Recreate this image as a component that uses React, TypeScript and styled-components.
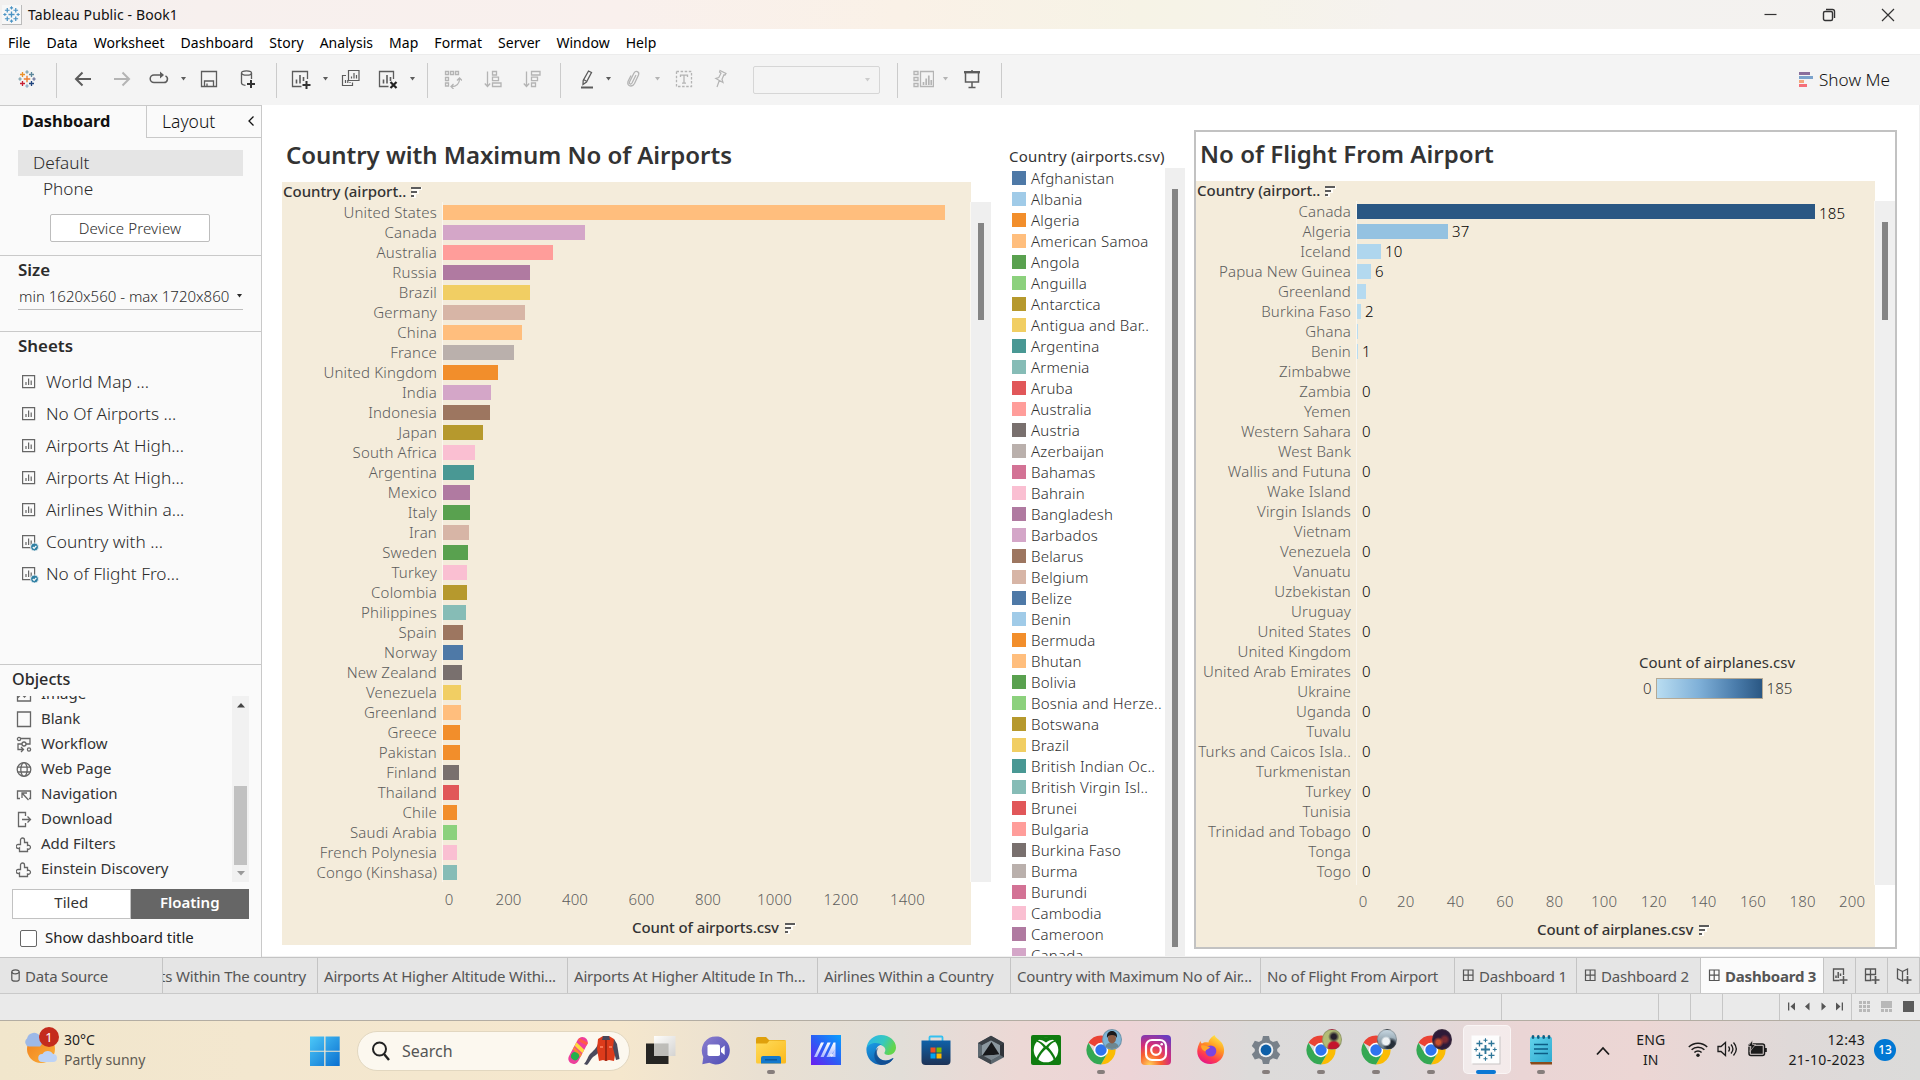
import React from 'react';
import styled, { createGlobalStyle, css } from 'styled-components';

const Global = createGlobalStyle`
  * { box-sizing: border-box; }
  html, body { margin: 0; padding: 0; overflow: hidden; background: #fff; }
  body { font-family: "Noto Sans", "Open Sans", sans-serif; color: #333; }
  svg { display: block; flex: none; }
`;

/* ---------- shell ---------- */
const Screen = styled.div`
  width: 1920px; height: 1080px; display: flex; flex-direction: column; overflow: hidden; white-space: nowrap;
`;
const TitleBar = styled.header`
  height: 29px; display: flex; align-items: center; padding-left: 2px; flex: none;
  background: linear-gradient(90deg, #f2f0ef 0, #f7f0ee 200px, #f9f0ed 620px, #faf1e7 900px, #f6f3e6 1140px, #f6f3e9 1250px, #f5f2ef 1400px, #f3f2f0 1920px);
`;
const AppBadge = styled.div`
  width: 20px; height: 20px; display: grid; place-items: center; background: #f7f7f7;
  border-right: 1px solid #bbb; border-bottom: 1px solid #bbb;
`;
const WindowTitle = styled.div`font-size: 14px; letter-spacing: 0.1px; color: #111; margin-left: 6px; flex: 1;`;
const WindowControls = styled.div`display: flex; gap: 45px; padding-right: 25px; align-items: center;`;
const MenuBar = styled.nav`
  height: 25px; display: flex; gap: 16px; padding: 2px 0 0 8px; background: #fff; flex: none;
  font-size: 14px; line-height: 24px; color: #000; letter-spacing: 0.03px;
`;
const Toolbar = styled.div`
  height: 51px; flex: none; display: flex; align-items: center; padding-bottom: 2px; background: #f4f4f4; border-top: 1px solid #ececec;
`;
const Tool = styled.div<{ $gap: number; $faded?: boolean }>`
  margin-left: ${p => p.$gap}px; flex: none; color: ${p => (p.$faded ? '#b4b4b4' : '#5c5c5c')};
`;
const ToolRule = styled.div<{ $gap: number }>`
  margin: 2px 0 0 ${p => p.$gap}px; width: 1px; height: 35px; background: #cbcbcb; flex: none;
`;
const ToolCombo = styled.div<{ $gap: number }>`
  margin: 2px 0 0 ${p => p.$gap}px; width: 127px; height: 28px; border: 1px solid #d6d6d6; border-radius: 2px; flex: none;
  display: flex; align-items: center; justify-content: flex-end; padding-right: 8px; color: #ccc;
`;
const ShowMe = styled.div`
  margin-left: auto; padding-right: 30px; display: flex; align-items: center; gap: 6px;
  font-size: 17.2px; font-weight: 350; color: #111;
  svg { margin-top: 1px; }
`;
const Work = styled.div`height: 852px; flex: none; display: flex;`;

/* ---------- side panel ---------- */
const Side = styled.aside`
  width: 262px; flex: none; display: flex; flex-direction: column; background: #fafafa;
  border-top: 1px solid #c9c9c9; border-right: 1px solid #c9c9c9;
`;
const SideTabs = styled.div`height: 32px; display: flex; flex: none; margin-bottom: 12px;`;
const SideTab = styled.div<{ $active?: boolean }>`
  display: flex; align-items: center;
  ${p => p.$active
    ? css`width: 146px; padding-left: 22px; font-size: 16.4px; font-weight: 700; color: #111; padding-bottom: 4px;`
    : css`flex: 1; padding: 0 6px 1px 15px; justify-content: space-between; font-size: 17.5px; font-weight: 350; color: #111;
        border-left: 1px solid #c9c9c9; border-bottom: 1px solid #c9c9c9;`}
  svg { margin-bottom: 1px; }
`;
const Device = styled.div<{ $indent: number; $on?: boolean }>`
  height: 26px; line-height: 25px; margin: 0 18px; padding-left: ${p => p.$indent}px; flex: none;
  font-size: 17.2px; font-weight: 350; color: #2b2b2b; background: ${p => (p.$on ? '#e5e5e5' : 'transparent')};
`;
const PreviewButton = styled.button`
  margin: 12px 0 13px 50px; width: 160px; height: 28px; flex: none; border: 1px solid #bdbdbd; border-radius: 2px; background: #fff;
  font: 350 15px "Noto Sans", sans-serif; letter-spacing: 0.15px; color: #2b2b2b; padding: 0;
`;
const Rule = styled.div`height: 1px; background: #c9c9c9; flex: none;`;
const Heading = styled.div`
  height: 28px; line-height: 28px; padding-left: 18px; font-size: 16.9px; font-weight: 650; color: #2b2b2b; flex: none;
`;
const ObjectsHeading = styled(Heading)`padding-left: 12px; font-size: 16.2px; font-weight: 500; margin-bottom: 3px;`;
const SizeSelect = styled.div`
  height: 26px; margin: 0 18px 21px; border-bottom: 1px solid #bdbdbd; display: flex; align-items: center; justify-content: space-between;
  font-size: 15px; font-weight: 350; color: #2b2b2b; flex: none; padding: 0 0 1px 1px;
`;
const SheetList = styled.div`flex: 1; padding-top: 5px;`;
const SheetItem = styled.div`
  height: 32px; display: flex; align-items: center; gap: 7px; padding-left: 21px; font-size: 17.3px; font-weight: 350; color: #2b2b2b;
  svg { margin-top: 2px; }
`;
const ObjectsArea = styled.div`height: 186px; display: flex; overflow: hidden; flex: none;`;
const ObjectItems = styled.div`flex: 1; margin-top: -16px;`;
const ObjectItem = styled.div`
  height: 25px; display: flex; align-items: center; gap: 9px; padding-left: 16px; font-size: 15px; color: #333;
  svg { margin-top: 3px; }
`;
const ObjectScroll = styled.div`
  width: 17px; margin-right: 12px; background: #f1f1f1; display: flex; flex-direction: column; align-items: center; padding: 7px 0 6px;
`;
const ObjectThumb = styled.div`width: 13px; height: 79px; margin: auto 0 6px; background: #c1c1c1;`;
const Toggle = styled.div`display: flex; margin: 7px 12px 11px; height: 30px; flex: none;`;
const ToggleHalf = styled.div<{ $on?: boolean }>`
  flex: 1; text-align: center; line-height: 25px; font-size: 15px; border: 1px solid ${p => (p.$on ? '#666' : '#c2c2c2')};
  background: ${p => (p.$on ? '#666' : '#fff')}; color: ${p => (p.$on ? '#fff' : '#333')}; font-weight: ${p => (p.$on ? 600 : 400)};
`;
const TitleCheck = styled.label`
  display: flex; align-items: center; gap: 8px; padding: 0 0 2px 20px; height: 16px; margin-bottom: 11px; font-size: 15px; color: #222; flex: none;
`;
const Box = styled.span`width: 17px; height: 17px; margin-top: 2px; border: 1px solid #666; border-radius: 2px; background: #fff;`;

/* ---------- dashboard canvas ---------- */
const Canvas = styled.main`
  flex: 1; display: flex; align-items: flex-start; padding-left: 20px; background: #fff; overflow: hidden;
  border-right: 1px solid #efefef; border-bottom: 1px solid #f1f1f1;
`;
const Sheet = styled.section`width: 709px; padding-top: 23px; flex: none;`;
const SheetTitle = styled.h2`
  margin: 0; height: 54px; line-height: 53px; padding-left: 4px; font-size: 24px; font-weight: 620; color: #333; letter-spacing: -0.05px;
`;
const Framed = styled.section`
  position: relative; width: 703px; height: 819px; margin: 25px 0 0 9px; border: 2px solid #c2c2c2; flex: none;
`;
const FramedTitle = styled(SheetTitle)`height: 49px; line-height: 43px; letter-spacing: 0.03px;`;
const FieldHeader = styled.div<{ $w: number }>`
  width: ${p => p.$w}px; height: 20px; line-height: 18px; display: flex; align-items: center; gap: 5px; padding: 0 0 2px 1px;
  background: #f4ecdb; font-size: 15px; font-weight: 500; color: #333; letter-spacing: -0.03px;
  svg { margin-top: 2px; }
`;
const PlotRow = styled.div<{ $h: number }>`display: flex; height: ${p => p.$h}px;`;
const Plot = styled.div<{ $w: number }>`width: ${p => p.$w}px; background: #f4ecdb; border-right: 1px solid #fbf8f1; display: flex;`;
const Names = styled.div`width: 161px; padding-right: 5px; flex: none; border-right: 1px solid #faf6ee;`;
const Name = styled.div`
  height: 20px; line-height: 20px; display: flex; justify-content: flex-end; font-size: 15px; font-weight: 345; color: #5c5c5c; letter-spacing: 0.18px;
`;
const Bars = styled.div`flex: 1;`;
const BarRow = styled.div`height: 20px; display: flex; align-items: center;`;
const Bar = styled.div`height: 15px; margin-top: 1px; flex: none;`;
const Value = styled.span<{ $drop?: boolean }>`
  margin-left: 4px; font-size: 15px; line-height: 20px; padding-top: ${p => (p.$drop ? 3 : 0)}px; color: #000; font-weight: 350; letter-spacing: 0.2px;
`;
const Scroll = styled.div`width: 20px; background: #efefef; padding: 21px 7px 0;`;
const Thumb = styled.div<{ $h: number }>`height: ${p => p.$h}px; width: 6px; background: #858585;`;
const AxisArea = styled.div<{ $w: number; $h: number }>`width: ${p => p.$w}px; height: ${p => p.$h}px; background: #f4ecdb;`;
const Ticks = styled.div<{ $left: number; $h: number; $line: number }>`
  display: flex; padding-left: ${p => p.$left}px; height: ${p => p.$h}px; line-height: ${p => p.$line}px;
`;
const Tick = styled.span<{ $w: number }>`
  width: ${p => p.$w}px; flex: none; text-align: center; font-size: 15px; font-weight: 345; color: #5c5c5c; letter-spacing: 0.15px;
`;
const AxisTitle = styled.div<{ $left: number }>`
  padding: 0 0 2px ${p => p.$left}px; display: flex; align-items: center; gap: 6px; height: 20px; line-height: 18px;
  font-size: 15px; font-weight: 500; color: #333; letter-spacing: -0.1px;
  svg { margin-top: 2px; }
`;
const Legend = styled.section`width: 176px; margin-left: 18px; padding-top: 40px; flex: none;`;
const LegendTitle = styled.div`height: 23px; line-height: 22px; font-size: 15px; font-weight: 450; color: #333; letter-spacing: 0.22px;`;
const LegendBody = styled.div`display: flex; height: 789px; overflow: hidden;`;
const LegendItems = styled.div`flex: 1; min-width: 0;`;
const LegendItem = styled.div`
  height: 21px; line-height: 21px; display: flex; align-items: center; gap: 5px; padding-left: 3px; font-size: 15px; font-weight: 350; color: #2f2f2f; letter-spacing: 0.2px;
`;
const Swatch = styled.i<{ $c: string }>`width: 14px; height: 14px; margin-bottom: 1px; background: ${p => p.$c}; flex: none;`;
const ColorKey = styled.div`
  position: absolute; left: 443px; top: 519px; font-size: 15px; color: #333; font-weight: 450; line-height: 22px; letter-spacing: 0.03px;
`;
const RampRow = styled.div`display: flex; align-items: center; gap: 4px; padding-left: 4px; font-weight: 350; margin-top: 4px;`;
const Ramp = styled.div`width: 107px; height: 21px; border: 1px solid #b3a996; background: linear-gradient(90deg, #b9ddf1, #7fb0d8 40%, #4a7cab 75%, #2a5783);`;

/* ---------- sheet tabs and status ---------- */
const TabBar = styled.div`
  height: 37px; flex: none; display: flex; background: #e5e5e5; border-top: 1px solid #c4c4c4; border-bottom: 1px solid #c9c9c9;
`;
const Tab = styled.div<{ $w: number; $active?: boolean; $end?: boolean; $lead?: number }>`
  width: ${p => p.$w}px; flex: none; overflow: hidden; display: flex; align-items: center; gap: 5px;
  padding: 0 ${p => (p.$end ? 11 : 0)}px 0 ${p => p.$lead ?? 6}px;
  justify-content: ${p => (p.$end ? 'flex-end' : 'flex-start')};
  border-right: 1px solid #c4c4c4; font-size: 15px; letter-spacing: -0.2px;
  color: #555; background: ${p => (p.$active ? '#fbfbfb' : 'transparent')}; font-weight: ${p => (p.$active ? 700 : 400)};
`;
const AddTab = styled(Tab)`padding: 0; justify-content: center;`;
const Status = styled.div`
  height: 26px; flex: none; display: flex; justify-content: flex-end; background: #eaeaea; color: #555;
`;
const StatusCell = styled.div<{ $w: number; $gap?: number }>`
  width: ${p => p.$w}px; border-left: 1px solid #c6c6c6; display: flex; align-items: center; justify-content: center; gap: ${p => p.$gap || 0}px; padding-bottom: 2px;
`;

/* ---------- taskbar ---------- */
const Taskbar = styled.footer`
  height: 60px; flex: none; display: flex; align-items: center; border-top: 1px solid #b3ada3;
  background: linear-gradient(90deg, #f1e6cc 0, #f3e7cf 250px, #f5e7cd 620px, #e9e0d2 760px, #e2ded8 900px, #ecd8d5 1020px, #edd4d7 1130px, #dddbda 1250px, #dcdadb 1380px, #ead5d5 1520px, #ecd6d4 1640px, #dfd9d8 1790px, #dbdbda 1920px);
`;
const Weather = styled.div`display: flex; width: 310px; padding-left: 25px; gap: 7px; align-items: center;`;
const WeatherArt = styled.div`position: relative; width: 32px; height: 44px;`;
const Alert = styled.span`
  position: absolute; left: 14px; top: -2px; width: 20px; height: 20px; border-radius: 50%; background: #c42b1c; color: #fff;
  font-size: 13px; line-height: 20px; text-align: center;
`;
const WeatherText = styled.div`font-size: 14px; line-height: 20px; color: #5f5b52; margin-top: -2px; b { font-weight: 400; color: #222; display: block; }`;
const SearchBox = styled.div`
  margin-left: 17px; width: 273px; height: 40px; border-radius: 20px; background: #fcf8ef; border: 1px solid #e2d7c0;
  display: flex; align-items: center; padding: 0 8px 0 13px; font-size: 16px; color: #555; flex: none;
  span { margin-left: 11px; flex: 1; }
`;
const Pins = styled.div`display: flex; margin-left: 3px; height: 60px;`;
const Pin = styled.div<{ $on?: boolean }>`
  position: relative; width: 55.06px; display: flex; flex-direction: column; align-items: center; padding-top: 14px;
  ${p => p.$on && css`&::before { content: ''; position: absolute; inset: 4px 3px 7px 4px; background: rgba(255,255,255,.5); border: 1px solid rgba(255,255,255,.5); border-radius: 5px; }`}
  svg { position: relative; }
`;
const Dot = styled.i<{ $on?: boolean }>`
  position: relative; margin-top: 5px; width: ${p => (p.$on ? 20 : 8)}px; height: 4px; border-radius: 2px; background: ${p => (p.$on ? '#0b78d4' : '#867e7c')};
`;
const Avatar = styled.span<{ $bg: string }>`
  position: absolute; left: 28.500px; top: 8px; width: 20px; height: 21px; border-radius: 50%; overflow: hidden; background: ${p => p.$bg}; border: 1px solid rgba(90,90,90,.35);
`;
const Tray = styled.div`flex: 1; display: flex; align-items: center; color: #1b1b1b; font-size: 14px;`;
const TrayChevron = styled.div`margin-left: 27px;`;
const Lang = styled.div`width: 34px; margin: -2px 0 0 24px; text-align: center; line-height: 20px; font-size: 14px; letter-spacing: 0.1px;`;
const TrayIcons = styled.div`display: flex; gap: 9px; margin: -3px 0 0 20px; align-items: center;`;
const Clock = styled.div`margin: -2px 0 0 auto; text-align: right; line-height: 20px; font-size: 14px; letter-spacing: 0.35px;`;
const Notice = styled.div`
  width: 22px; height: 22px; border-radius: 50%; background: #0078d4; color: #fff; font-size: 12px; font-weight: 500; line-height: 21px; text-align: center; margin: -1px 24px 0 9px;
`;

/* ---------- data ---------- */
const palette = ['#4e79a7', '#a0cbe8', '#f28e2b', '#ffbe7d', '#59a14f', '#8cd17d', '#b6992d', '#f1ce63', '#499894', '#86bcb6',
  '#e15759', '#ff9d9a', '#79706e', '#bab0ac', '#d37295', '#fabfd2', '#b07aa1', '#d4a6c8', '#9d7660', '#d7b5a6'];

const airports: [string, number, number][] = [
  ['United States', 502, 3], ['Canada', 142, 17], ['Australia', 110, 11], ['Russia', 87, 16], ['Brazil', 87, 7], ['Germany', 82, 19],
  ['China', 79, 3], ['France', 71, 13], ['United Kingdom', 55, 2], ['India', 48, 17], ['Indonesia', 47, 18], ['Japan', 40, 6],
  ['South Africa', 32, 15], ['Argentina', 31, 8], ['Mexico', 27, 16], ['Italy', 27, 4], ['Iran', 26, 19], ['Sweden', 25, 4],
  ['Turkey', 24, 15], ['Colombia', 24, 6], ['Philippines', 23, 9], ['Spain', 20, 18], ['Norway', 20, 0], ['New Zealand', 19, 12],
  ['Venezuela', 18, 7], ['Greenland', 18, 3], ['Greece', 17, 2], ['Pakistan', 17, 2], ['Finland', 16, 12], ['Thailand', 16, 10],
  ['Chile', 14, 2], ['Saudi Arabia', 14, 5], ['French Polynesia', 14, 15], ['Congo (Kinshasa)', 14, 9],
];

const legend = ['Afghanistan', 'Albania', 'Algeria', 'American Samoa', 'Angola', 'Anguilla', 'Antarctica', 'Antigua and Bar..', 'Argentina',
  'Armenia', 'Aruba', 'Australia', 'Austria', 'Azerbaijan', 'Bahamas', 'Bahrain', 'Bangladesh', 'Barbados', 'Belarus', 'Belgium', 'Belize',
  'Benin', 'Bermuda', 'Bhutan', 'Bolivia', 'Bosnia and Herze..', 'Botswana', 'Brazil', 'British Indian Oc..', 'British Virgin Isl..', 'Brunei',
  'Bulgaria', 'Burkina Faso', 'Burma', 'Burundi', 'Cambodia', 'Cameroon', 'Canada'];

const flights: [string, number, string, string][] = [
  ['Canada', 458, '#2a5783', '185'], ['Algeria', 91, '#94c2e1', '37'], ['Iceland', 24, '#afd6ee', '10'], ['Papua New Guinea', 14, '#b3d9ef', '6'],
  ['Greenland', 9, '#b5daf0', ''], ['Burkina Faso', 4, '#b7dcf0', '2'], ['Ghana', 1, '#b8dcf1', ''], ['Benin', 1, '#b8dcf1', '1'],
];
const restNames = ['Zimbabwe', 'Zambia', 'Yemen', 'Western Sahara', 'West Bank', 'Wallis and Futuna', 'Wake Island', 'Virgin Islands', 'Vietnam',
  'Venezuela', 'Vanuatu', 'Uzbekistan', 'Uruguay', 'United States', 'United Kingdom', 'United Arab Emirates', 'Ukraine', 'Uganda', 'Tuvalu',
  'Turks and Caicos Isla..', 'Turkmenistan', 'Turkey', 'Tunisia', 'Trinidad and Tobago', 'Tonga', 'Togo'];
restNames.forEach((n, i) => flights.push([n, 1, 'transparent', i % 2 ? '0' : '']));

/* ---------- icons ---------- */
const plus = (x: number, y: number, r: number, c: string, w = 1) => (
  <path key={`${x}-${y}`} d={`M${x - r} ${y}h${2 * r}M${x} ${y - r}v${2 * r}`} stroke={c} strokeWidth={w} fill="none" />
);
const TableauMark = ({ size, mono }: { size: number; mono?: string }) => (
  <svg width={size} height={size} viewBox="0 0 18 18">
    {plus(9, 9, 3.2, mono || '#eb7d30', 1.4)}
    {plus(4.5, 4.5, 2.5, mono || '#eb9129', 1.3)}{plus(13.5, 4.5, 2.5, mono || '#5b879b', 1.3)}
    {plus(4.5, 13.5, 2.5, mono || '#c72035', 1.3)}{plus(13.5, 13.5, 2.5, mono || '#1f447e', 1.3)}
    {plus(9, 2, 1.7, mono || '#7199a6', 1.1)}{plus(9, 16, 1.7, mono || '#7b9fc0', 1.1)}
    {plus(2, 9, 1.7, mono || '#7199a6', 1.1)}{plus(16, 9, 1.7, mono || '#5c6692', 1.1)}
  </svg>
);
const Caret = () => <svg width="7" height="4" viewBox="0 0 7 4"><path d="M1 0h5L3.500 3.600z" fill="currentColor" /></svg>;
const Ico = ({ w, h = 20, sw = 1.3, children }: { w: number; h?: number; sw?: number; children: React.ReactNode }) => (
  <svg width={w} height={h} viewBox={`0 0 ${w} ${h}`} fill="none" stroke="currentColor" strokeWidth={sw}>{children}</svg>
);
const Back = () => <Ico w={18} sw={2}><path d="M17 10H2M8.500 3.500L2 10l6.500 6.500" /></Ico>;
const Forward = () => <Ico w={18} sw={2}><path d="M1 10H16M9.500 3.500L16 10l-6.500 6.500" /></Ico>;
const Replay = () => <Ico w={20} sw={1.5}><path d="M13 6H5a3.800 3.800 0 0 0 0 7.600h10a3.600 3.600 0 0 0 1.500-6.800" /><path d="M11 2.500L15 6l-4 3.500z" fill="currentColor" stroke="none" /></Ico>;
const Save = () => <Ico w={18}><path d="M1.500 2.500h15v15h-15zM4.500 17.500v-5.500h9v5.500M7 17.500v-3" /></Ico>;
const DataAdd = () => (
  <Ico w={16}><ellipse cx="6.500" cy="4" rx="5" ry="2.200" /><path d="M1.500 4v10c0 1.300 1.500 2 4 2.300M11.500 4v6" /><path d="M7 15h8M11 11v8" stroke="#333" strokeWidth="2" /></Ico>
);
const SheetAdd = () => (
  <Ico w={20}><path d="M16.500 10V2.500h-15v15h9" /><path d="M5.500 14.500v-4M9 14.500V6M12.500 12V8" strokeWidth="1.600" /><path d="M11.500 16h8M15.500 12v8" stroke="#333" strokeWidth="2" /></Ico>
);
const SheetClear = () => (
  <Ico w={20}><path d="M15.500 10V2.500h-14v15h9" /><path d="M5.500 14.500v-4M9 14.500V6M12.500 12V8" strokeWidth="1.600" /><path d="M12.500 13l6 6M18.500 13l-6 6" stroke="#222" strokeWidth="2.200" /></Ico>
);
const Duplicate = () => (
  <Ico w={19} sw={1.2}><path d="M7.500 1.500h10.500v10H7.500zM5 6.500H1.500v10h10v-3" /><path d="M10.500 9.500v-2M13 9.500V4M15.500 9.500V6M4.500 14v-3M6.800 14v-3M9 14v-1" /></Ico>
);
const Swap = () => (
  <Ico w={18}><path d="M1.500 2.500h3v3h-3zM6.500 2.500h3v3h-3zM11.500 2.500h3v3h-3zM1.500 8.500h3v3h-3zM1.500 14h3v3h-3zM7.500 17.500c5 0 8-3 8-7.500M9.500 15l-2.500 2.500L9.500 20M13 11.500L15.500 9l2.500 2.500" /></Ico>
);
const SortUp = () => <Ico w={18}><path d="M3.500 2.500v15M.8 14.500l2.700 3 2.700-3M8.500 2.500h4v3.500h-4zM8.500 8.200h6v3.500h-6zM8.500 14h8.500v3.500H8.500z" /></Ico>;
const SortDown = () => <Ico w={18}><path d="M3.500 2.500v15M.8 14.500l2.700 3 2.700-3M8.500 2.500h8.500v3.500H8.500zM8.500 8.200h6v3.500h-6zM8.500 14h4v3.500h-4z" /></Ico>;
const Highlight = () => <Ico w={16}><path d="M9.500 2l3 1.500-5 9.500-3.500 2.500.2-4z" /><path d="M4.500 10.500l3 1.800" /><path d="M2 18.500h12" strokeWidth="2" /></Ico>;
const Clip = () => <Ico w={15}><path d="M10 6l-4 8c-1.300 2-3.300.8-2.500-1L8 4c1.700-3 5.800-1.500 4.500 2L8.500 14.500c-2 4-8 3-6.500-2L5 6.500" /></Ico>;
const TextBox = () => <Ico w={18}><path d="M1.500 2.500h15v15h-15z" strokeDasharray="2.500 1.600" /><path d="M5.500 8V6.200h7V8M9 6.200v8M7 14.200h4" /></Ico>;
const PinIcon = () => <Ico w={14} sw={1.2}><path d="M6 1.500l6 3-1 1.500-1-.2-2 4.500 1 3.200L1.800 9.500l3-1L7 4.200 5.500 3zM5.300 11.500L3 18" /></Ico>;
const Cards = () => (
  <Ico w={21}><path d="M1 2.500h4v3H1zM1 8.500h4v3H1zM1 14.500h4v3H1zM7.500 2.500h13v15h-13z" /><path d="M10.500 16v-3M13.200 16V9.500M15.800 16V6.500M18.300 16v-5" strokeWidth="1.700" /></Ico>
);
const Present = () => <Ico w={18}><path d="M1 3.200h16" strokeWidth="2.400" /><path d="M9 1v2M2.500 4v9h13V4M9 13v5.500M5.500 18.500h7" strokeWidth="1.500" /></Ico>;

const SortMark = () => (
  <svg width="11" height="12" viewBox="0 0 11 12">
    <path d="M1 1h10v3H8v4H5v4H1z" fill="#fffdf8" /><path d="M0 1h10v2H0zM0 5h6v2H0zM0 9h3v2H0z" fill="#5c5c5c" />
  </svg>
);
const SheetIcon = ({ used }: { used?: boolean }) => (
  <svg width="18" height="18" viewBox="0 0 18 18" fill="none" stroke="#666" strokeWidth="1.200">
    <path d="M1.600 2.600h12v12h-12z" /><path d="M5 12V9M7.600 12V5.500M10.200 12V7.500" />
    {used && <><circle cx="13.500" cy="14" r="4" fill="#2e7fa3" stroke="#fafafa" strokeWidth=".8" /><path d="M11.800 14l1.300 1.300 2.200-2.500" stroke="#fff" /></>}
  </svg>
);
const GridIcon = () => <Ico w={12} h={13} sw={1.2}><path d="M1.500 1h9.500v10.500H1.500zM6.200 1v10.500M1.500 6.200h9.500" /></Ico>;
const Cyl = () => <Ico w={9} h={13} sw={1.2}><ellipse cx="4.500" cy="2.800" rx="3.700" ry="2" /><path d="M.8 3v7.500c0 1 1.500 1.700 3.700 1.700s3.700-.7 3.700-1.700V3" /></Ico>;
const AddSheet = () => <Ico w={16} h={18}><path d="M11.500 8V2h-10v11.500h6" /><path d="M4 11V8.500M6.200 11V5M8.500 9V6.500M7.500 13h8M11.500 9v8" strokeWidth="1.500" /></Ico>;
const AddDash = () => <Ico w={16} h={18}><path d="M11.500 8V2h-10v11.500h6M6.500 2v11M1.500 7.500h10" /><path d="M7.500 13h8M11.500 9v8" strokeWidth="1.700" /></Ico>;
const AddStory = () => <Ico w={16} h={18}><path d="M6.500 4.500L1.500 2v9.500l5 2.500zM6.500 4.500l5-2.500v6" /><path d="M7.500 13h8M11.500 9v8" strokeWidth="1.700" /></Ico>;

const objectIcons: Record<string, React.ReactNode> = {
  Image: <path d="M1.500 2h13v13h-13zM1.500 12l4-4 3 3 5-5" />,
  Blank: <path d="M1.500 1h13v14.500h-13z" />,
  Workflow: <><circle cx="3" cy="3" r="1.600" /><circle cx="8" cy="8" r="2" /><circle cx="13" cy="13.500" r="1.600" /><path d="M4.600 2.500H14V8h-4M6 8H2v5.500h5M5 11l2.500 2.500L5 16" /></>,
  'Web Page': <><circle cx="8" cy="8.500" r="6.800" /><ellipse cx="8" cy="8.500" rx="3.200" ry="6.800" /><path d="M1.500 6.200h13M1.500 11h13" /></>,
  Navigation: <><path d="M4 12.500H1.500V5h13v7.500H13" /><path d="M6 7l6.500 7M6 12V7h5" /></>,
  Download: <><path d="M9.500 5V1.500h-7v14h7V12" /><path d="M6 8.500h8M11.500 5.500l3 3-3 3" /></>,
  Puzzle: <path d="M4.500 5.500V4a2 2 0 1 1 4 0v2.500h3v3a2 2 0 1 1 0 3.500v2.500H3.500v-3.500a2 2 0 1 1-1-3.500h2z" />,
};
const objects: [string, string][] = [['Image', 'Image'], ['Blank', 'Blank'], ['Workflow', 'Workflow'], ['Web Page', 'Web Page'],
  ['Navigation', 'Navigation'], ['Download', 'Download'], ['Add Filters', 'Puzzle'], ['Einstein Discovery', 'Puzzle']];

/* ---------- taskbar art ---------- */
const A = ({ children }: { children: React.ReactNode }) => <svg width="30" height="30" viewBox="0 0 30 30">{children}</svg>;
const ChromeArt = () => (
  <A>
    <path d="M15 15L2.440 7.750A14.500 14.500 0 0 1 27.560 7.750H15z" fill="#ea4335" />
    <path d="M27.560 7.750A14.500 14.500 0 0 1 15 29.500L21.300 18.600 15 7.750z" fill="#fbbc04" />
    <path d="M2.440 7.750A14.500 14.500 0 0 0 15 29.500l6.300-10.900L15 15 8.700 18.600z" fill="#34a853" />
    <circle cx="15" cy="15" r="7.200" fill="#fff" /><circle cx="15" cy="15" r="5.700" fill="#2f74ee" />
  </A>
);
const WindowsArt = () => (
  <svg width="30" height="30" viewBox="0 0 30 30">
    <defs><linearGradient id="win" x1="0" y1="0" x2="1" y2="1"><stop offset="0" stopColor="#4cc8f8" /><stop offset="1" stopColor="#0a6fd0" /></linearGradient></defs>
    <path d="M0 .5h14.200v14.200H0zM15.500 .5H29.700v14.200H15.500zM0 15.800h14.200V30H0zM15.500 15.800h14.200V30H15.500z" fill="url(#win)" />
  </svg>
);
const TaskView = () => (
  <A>
    <defs><linearGradient id="tv" x1="0" y1="0" x2="1" y2="1"><stop offset="0" stopColor="#fff" /><stop offset="1" stopColor="#d2d2d2" /></linearGradient></defs>
    <path d="M0 8.500h22.500V29H0z" fill="#262523" /><path d="M8 1h21.500v20H8z" fill="url(#tv)" opacity=".93" /><path d="M8 8.500h14.500V21H8z" fill="#b9b7b3" opacity=".85" />
  </A>
);
const ChatArt = () => (
  <A>
    <defs><linearGradient id="chat" x1="0" y1="0" x2="1" y2="1"><stop offset="0" stopColor="#8d7fd0" /><stop offset="1" stopColor="#4b4cb4" /></linearGradient></defs>
    <path d="M.8 15A14 14 0 1 1 8.300 27.800L1.300 29.300 2.300 22a14 14 0 0 1-1.500-7z" fill="url(#chat)" />
    <rect x="6.500" y="9.500" width="12.500" height="11.500" rx="1.800" fill="#fff" /><path d="M20 13.500l3.700-3v9.500l-3.700-3z" fill="#fff" />
  </A>
);
const FolderArt = () => (
  <A>
    <defs><linearGradient id="fold" x1="0" y1="0" x2="1" y2="1"><stop offset="0" stopColor="#ffdc5c" /><stop offset="1" stopColor="#fbb91b" /></linearGradient></defs>
    <path d="M0 4a2 2 0 0 1 2-2h8l3 3h15a2 2 0 0 1 2 2v6H0z" fill="#dfa00c" />
    <path d="M0 8.500h11l2.500-3H30V27a1.500 1.500 0 0 1-1.500 1.500h-27A1.500 1.500 0 0 1 0 27z" fill="url(#fold)" />
    <path d="M5 28.500V23a2 2 0 0 1 2-2h16a2 2 0 0 1 2 2v5.500z" fill="#1379cc" /><path d="M9 24.800h12" stroke="#0a5292" strokeWidth="1.200" />
  </A>
);
const MyAsus = () => (
  <A>
    <defs>
      <linearGradient id="asus" x1="1" y1="0" x2="0" y2="1"><stop offset="0" stopColor="#0aa0ff" /><stop offset=".5" stopColor="#2b5ff5" /><stop offset="1" stopColor="#6a1cf0" /></linearGradient>
      <linearGradient id="asus2" x1="0" y1="0" x2="0" y2="1"><stop offset="0" stopColor="#fff" /><stop offset="1" stopColor="#a9b8ff" /></linearGradient>
    </defs>
    <path d="M0 0h30v30H0z" fill="url(#asus)" />
    <path d="M3 22L10 7.500h3L6 22zM9.500 22l7-14.500h3.200L12.700 22zM15.500 22l7-14.500h2V22h-3v-3l3-5-5.500 8z" fill="url(#asus2)" />
    <circle cx="20.500" cy="20.300" r="1.700" fill="#dfe6ff" />
  </A>
);
const EdgeArt = () => (
  <A>
    <defs>
      <linearGradient id="e1" x1="0" y1="0" x2="1" y2=".4"><stop offset="0" stopColor="#2bb3ee" /><stop offset=".6" stopColor="#36c8c0" /><stop offset="1" stopColor="#62d54c" /></linearGradient>
      <linearGradient id="e2" x1="0" y1="0" x2=".6" y2="1"><stop offset="0" stopColor="#1b9de6" /><stop offset="1" stopColor="#0f5cab" /></linearGradient>
    </defs>
    <path d="M.5 13C1.500 5.500 7.500 0 15 0c8.500 0 15 6 15 12.500 0 4.500-3.500 7.500-7.500 7.500-3 0-4.500-1-4-2.500 1.500-2 1-4.500-1-6C13 8 4 8 .5 13z" fill="url(#e1)" />
    <path d="M.5 13C3 7.500 12 6.500 16 10c-3-.5-6 2-6 6.500 0 6 6 10.500 12.500 8.500 2.500-.7 4.500-2.500 5-2C25.500 27 21 30 15 30 6 30-.5 22 .5 13z" fill="url(#e2)" />
    <path d="M12.500 12.500c-4 6 0 13.500 8.500 13.200 2.800-.2 6.500-2.700 6.500-2.700-2 4-6.500 7-12 7C8 28.500 5.500 17 12.500 12.500z" fill="#114a8b" opacity=".75" />
  </A>
);
const StoreArt = () => (
  <A>
    <defs><linearGradient id="store" x1="0" y1="0" x2="0" y2="1"><stop offset="0" stopColor="#0f61a8" /><stop offset="1" stopColor="#1d3357" /></linearGradient></defs>
    <path d="M8.500 7V2.500A1 1 0 0 1 9.500 1.500h11a1 1 0 0 1 1 1V7" stroke="#35c0f0" strokeWidth="1.800" fill="none" />
    <path d="M.5 5.500h29V26a4 4 0 0 1-4 4h-21a4 4 0 0 1-4-4z" fill="url(#store)" />
    <path d="M9.500 12.500h5v5h-5z" fill="#f25022" /><path d="M15.500 12.500h5v5h-5z" fill="#7fba00" /><path d="M9.500 18.500h5v5h-5z" fill="#00a4ef" /><path d="M15.500 18.500h5v5h-5z" fill="#ffb900" />
  </A>
);
const CrateArt = () => (
  <A>
    <path d="M15 .8l13 7.200v14.300L15 29.200 2 22.300V8z" fill="#5d6870" /><path d="M15 .8l13 7.200-4 2.200L15 5.500 6 10.200 2 8z" fill="#3a3f45" />
    <path d="M15 5.500l9 4.700v9.800L15 25l-9-5v-9.800z" fill="#8b979f" /><path d="M15.500 7l8 12.500-17.500 1.500z" fill="#17181b" />
    <path d="M6 21L23.500 19.500 15 25z" fill="#7b868e" /><path d="M28 8v14.300l-4-2.300v-9.800z" fill="#30343a" /><path d="M2 22.300L6 20l9 5v4.200z" fill="#41474d" />
  </A>
);
const XboxArt = () => (
  <A>
    <rect width="30" height="30" rx="2" fill="#107c10" /><circle cx="15" cy="15" r="12.300" fill="#fff" />
    <path d="M7.500 4.800C10 4.500 13 6 15 7.600 17 6 20 4.500 22.500 4.800 18 1.500 12 1.500 7.500 4.800z" fill="#107c10" />
    <path d="M6.500 5.500c3 .5 6 3 8.500 5.700 2.500-2.700 5.500-5.200 8.500-5.700l1 1.200c-2.500.3-5 2.700-7.200 5.600 4 4.500 7.700 9.700 7.200 12.700l-1.500 1.200c-.5-4-4-8.700-8-12.200-4 3.500-7.500 8.200-8 12.200l-1.500-1.200c-.5-3 3.200-8.200 7.200-12.700C10.500 9.400 8 7 5.500 6.700z" fill="#107c10" />
  </A>
);
const InstaArt = () => (
  <A>
    <defs>
      <radialGradient id="ig" cx=".28" cy="1" r="1.100"><stop offset="0" stopColor="#ffd35a" /><stop offset=".35" stopColor="#f9602e" /><stop offset=".62" stopColor="#d62f78" /><stop offset="1" stopColor="#6a3cc0" /></radialGradient>
    </defs>
    <rect width="30" height="30" rx="4" fill="url(#ig)" /><rect x="5" y="5" width="20" height="20" rx="6" fill="none" stroke="#fff" strokeWidth="2.200" />
    <circle cx="15" cy="15" r="4.800" fill="none" stroke="#fff" strokeWidth="2.200" /><circle cx="20.700" cy="9.300" r="1.300" fill="#fff" />
  </A>
);
const FirefoxArt = () => (
  <A>
    <defs><linearGradient id="fx" x1=".8" y1="0" x2=".3" y2="1"><stop offset="0" stopColor="#fff04a" /><stop offset=".4" stopColor="#ff9a22" /><stop offset=".75" stopColor="#ff3b4e" /><stop offset="1" stopColor="#e3158b" /></linearGradient></defs>
    <path d="M18.500 0c1 3.500 6 5 8 9 4.500 9-1 19.500-11.500 20C5.500 29.500 0 22 1.500 14 2 10.500 3.500 8 4.500 6c.3 1.500.8 2 1.500 2.600C8 7 10 7 12.500 7.600 13 4 16 2 18.500 0z" fill="url(#fx)" />
    <circle cx="14.800" cy="16" r="5.500" fill="#7a45e0" /><path d="M5 10.500c4-1 5 1 9 1.500-1 2.500-4 2-4.500 4.500-3-1-4.500-3-4.500-6z" fill="#ffa52a" />
  </A>
);
const GearArt = () => (
  <A>
    <path d="M12 1h6l1 4.200 3 1.700 4.200-1.200 3 5.200-3 3v2.400l3 3-3 5.200-4.200-1.200-3 1.700L18 29h-6l-1-4-3-1.700-4.200 1.200-3-5.200 3-3v-2.400l-3-3 3-5.200L8 6.900l3-1.700z" fill="#78818a" />
    <circle cx="15" cy="15" r="7.300" fill="#eef0f2" /><circle cx="15" cy="15" r="5.400" fill="#0c5fa8" />
  </A>
);
const TableauTask = () => (
  <svg width="30" height="30" viewBox="0 0 30 30">
    <path d="M1.500 1.500h28v28h-28z" fill="#c8c4c4" /><path d="M.5 .5h28v28H.5z" fill="#fdfdfd" />
    <g transform="translate(2.500 2.500) scale(1.330)">
      {plus(9, 9, 3.4, '#2d7598', 1.4)}{plus(4.5, 4.5, 2.3, '#2d7598', 1)}{plus(13.5, 4.5, 2.3, '#2d7598', 1)}{plus(4.5, 13.5, 2.3, '#2d7598', 1)}
      {plus(13.5, 13.5, 2.3, '#2d7598', 1)}{plus(9, 2, 1.5, '#2d7598', .8)}{plus(9, 16, 1.5, '#2d7598', .8)}{plus(2, 9, 1.5, '#2d7598', .8)}{plus(16, 9, 1.5, '#2d7598', .8)}
    </g>
  </svg>
);
const NotepadArt = () => (
  <A>
    <defs><linearGradient id="np" x1="0" y1="0" x2="1" y2="1"><stop offset="0" stopColor="#62d3ec" /><stop offset="1" stopColor="#2fa9cf" /></linearGradient></defs>
    <path d="M4 27h22v2.500H5z" fill="#8a4b1c" /><rect x="4" y="2" width="22" height="25" rx="1.500" fill="url(#np)" />
    <path d="M8 9.500h14M8 14h14M8 18.500h14" stroke="#0c5c85" strokeWidth="1.700" />
    {[7, 12.3, 17.7, 23].map(x => <ellipse key={x} cx={x} cy="2" rx="1.400" ry="2" fill="#0d5f83" />)}
  </A>
);
const WeatherIcon = () => (
  <svg width="32" height="44" viewBox="0 0 32 44">
    <defs><linearGradient id="sun" x1="0" y1="0" x2="1" y2="1"><stop offset="0" stopColor="#f07d1c" /><stop offset="1" stopColor="#fbb13a" /></linearGradient></defs>
    <circle cx="16" cy="20" r="14" fill="url(#sun)" />
    <path d="M4 17.500A4.500 4.500 0 0 1 2 9.500a7 7 0 0 1 13-2l3 6-3 4z" fill="#9db9e8" />
    <path d="M17 33a4 4 0 0 1 .5-8 6 6 0 0 1 10.500 0A3.800 3.800 0 0 1 28 33z" fill="#bdd3f6" />
  </svg>
);
const SearchArt = () => (
  <svg width="54" height="32" viewBox="0 0 54 32">
    <g transform="rotate(28 11 16)">
      <rect x="5.500" y="1" width="10.500" height="29" rx="5" fill="#ee3f9c" /><path d="M5.500 9l10.500 3v4l-10.500-3z" fill="#ffd93c" /><path d="M5.500 14l10.500 3v3l-10.500-3z" fill="#f78a35" />
      <circle cx="10.800" cy="22" r="4" fill="#22b14c" /><path d="M6 5.500h10" stroke="#ff5a4a" strokeWidth="3" />
    </g>
    <path d="M17 29c3-3 4-8 6-10 3-3 6-5 8-10l3 5c-2 4-5 6-8 8-2 2-4 6-6 8z" fill="#4a4a5c" />
    <path d="M31 4l5-3h6l5 3 2 10-2 12-5-1-3 1-3-1-4 1-2-12z" fill="#dd3b1b" /><path d="M36 1h6l1 4h-8z" fill="#46465a" /><path d="M47 4l3 5 2.500 15-3.500 1-3-12z" fill="#4a4a5c" />
    <path d="M39 5v21" stroke="#7c1c10" strokeWidth="1.300" /><path d="M33 12h3M42 12h3" stroke="#ff8a6a" strokeWidth="1.300" />
  </svg>
);

const tabs: { t: string; w: number; kind?: 'data' | 'end' | 'dash'; on?: boolean }[] = [
  { t: 'Data Source', w: 163, kind: 'data' }, { t: 'ts Within The country', w: 155, kind: 'end' },
  { t: 'Airports At Higher Altitude Withi...', w: 250 }, { t: 'Airports At Higher Altitude In Th...', w: 250 }, { t: 'Airlines Within a Country', w: 193 },
  { t: 'Country with Maximum No of Air...', w: 250 }, { t: 'No of Flight From Airport', w: 194 },
  { t: 'Dashboard 1', w: 122, kind: 'dash' }, { t: 'Dashboard 2', w: 124, kind: 'dash' }, { t: 'Dashboard 3', w: 123, kind: 'dash', on: true },
];
const tabLead = { data: 11, end: 0, dash: 7 };

const PersonAvatar = () => (
  <Avatar $bg="#7db4d6"><svg width="18" height="19" viewBox="0 0 18 19"><path d="M2 19c0-5 3-6.500 7-6.500s7 1.500 7 6.500z" fill="#6d8790" /><ellipse cx="9" cy="8.500" rx="4" ry="5" fill="#8a5c45" /><path d="M4 8c-.5-5 2-7 5-7s5.500 2 5 7c-1-2-2-3-5-3s-4 1-5 3z" fill="#1b1a1c" /></svg></Avatar>
);
const pins: { art: React.ReactNode; dot?: boolean; on?: boolean; avatar?: React.ReactNode }[] = [
  { art: <TaskView /> }, { art: <ChatArt /> }, { art: <FolderArt />, dot: true }, { art: <MyAsus /> }, { art: <EdgeArt /> }, { art: <StoreArt /> },
  { art: <CrateArt /> }, { art: <XboxArt /> }, { art: <ChromeArt />, dot: true, avatar: <PersonAvatar /> }, { art: <InstaArt /> }, { art: <FirefoxArt /> },
  { art: <GearArt />, dot: true },
  { art: <ChromeArt />, dot: true, avatar: <Avatar $bg="radial-gradient(circle at 60% 35%, #26202c 0 15%, transparent 35%), radial-gradient(circle at 60% 90%, #c4142c 0 25%, transparent 35%), #b3bd76" /> },
  { art: <ChromeArt />, dot: true, avatar: <Avatar $bg="radial-gradient(circle at 45% 60%, #eef2f4 0 22%, transparent 35%), radial-gradient(circle at 70% 80%, #26303a 0 22%, transparent 40%), linear-gradient(#c6d6e0, #6c7f8c)" /> },
  { art: <ChromeArt />, dot: true, avatar: <Avatar $bg="radial-gradient(circle at 30% 65%, #c4502e 0 12%, transparent 30%), radial-gradient(circle at 65% 50%, #7c2b33 0 15%, transparent 35%), #2e1a38" /> },
  { art: <TableauTask />, dot: true, on: true }, { art: <NotepadArt />, dot: true },
];

export default function App() {
  return (
    <Screen>
      <Global />
      <TitleBar>
        <AppBadge><TableauMark size={17} mono="#4a93c4" /></AppBadge>
        <WindowTitle>Tableau Public - Book1</WindowTitle>
        <WindowControls>
          <Ico w={14} h={14} sw={1.2}><path d="M1.500 6.500h12" /></Ico>
          <Ico w={14} h={14} sw={1.4}><rect x="1.500" y="3.500" width="9" height="9" rx="1.500" /><path d="M4 1.500h6.500a2 2 0 0 1 2 2V10" /></Ico>
          <Ico w={14} h={14} sw={1.2}><path d="M1 1l12 12M13 1L1 13" /></Ico>
        </WindowControls>
      </TitleBar>
      <MenuBar>
        {['File', 'Data', 'Worksheet', 'Dashboard', 'Story', 'Analysis', 'Map', 'Format', 'Server', 'Window', 'Help'].map(m => <span key={m}>{m}</span>)}
      </MenuBar>
      <Toolbar>
        <Tool $gap={18}><TableauMark size={18} /></Tool><ToolRule $gap={20} />
        <Tool $gap={17}><Back /></Tool><Tool $gap={21} $faded><Forward /></Tool><Tool $gap={18}><Replay /></Tool><Tool $gap={11}><Caret /></Tool>
        <Tool $gap={13}><Save /></Tool><Tool $gap={22}><DataAdd /></Tool><ToolRule $gap={20} />
        <Tool $gap={14}><SheetAdd /></Tool><Tool $gap={11}><Caret /></Tool><Tool $gap={12}><Duplicate /></Tool><Tool $gap={18}><SheetClear /></Tool>
        <Tool $gap={11}><Caret /></Tool><ToolRule $gap={11} />
        <Tool $gap={16} $faded><Swap /></Tool><Tool $gap={22} $faded><SortUp /></Tool><Tool $gap={21} $faded><SortDown /></Tool><ToolRule $gap={19} />
        <Tool $gap={18}><Highlight /></Tool><Tool $gap={10}><Caret /></Tool><Tool $gap={14} $faded><Clip /></Tool><Tool $gap={13} $faded><Caret /></Tool>
        <Tool $gap={14} $faded><TextBox /></Tool><Tool $gap={21} $faded><PinIcon /></Tool>
        <ToolCombo $gap={25}><Caret /></ToolCombo><ToolRule $gap={17} />
        <Tool $gap={15} $faded><Cards /></Tool><Tool $gap={8} $faded><Caret /></Tool><Tool $gap={14}><Present /></Tool><ToolRule $gap={20} />
        <ShowMe>
          <svg width="14" height="16" viewBox="0 0 14 16"><path d="M0 0h11v3H0z" fill="#8a6f9c" /><path d="M0 4h14v3H0z" fill="#7ba3cc" /><path d="M0 8h5v3H0z" fill="#f3a67b" /><path d="M0 12h8v3H0z" fill="#f56f79" /></svg>
          Show Me
        </ShowMe>
      </Toolbar>

      <Work>
        <Side>
          <SideTabs>
            <SideTab $active>Dashboard</SideTab>
            <SideTab>Layout<Ico w={8} h={12}><path d="M6.500 1.500L2 6l4.500 4.500" /></Ico></SideTab>
          </SideTabs>
          <Device $indent={15} $on>Default</Device>
          <Device $indent={25}>Phone</Device>
          <PreviewButton>Device Preview</PreviewButton>
          <Rule />
          <Heading>Size</Heading>
          <SizeSelect>min 1620x560 - max 1720x860<Caret /></SizeSelect>
          <Rule />
          <Heading>Sheets</Heading>
          <SheetList>
            {['World Map ...', 'No Of Airports ...', 'Airports At High...', 'Airports At High...', 'Airlines Within a...', 'Country with ...', 'No of Flight Fro...'].map((s, i) => (
              <SheetItem key={i}><SheetIcon used={i > 4} />{s}</SheetItem>
            ))}
          </SheetList>
          <Rule />
          <ObjectsHeading>Objects</ObjectsHeading>
          <ObjectsArea>
            <ObjectItems>
              {objects.map(([name, icon]) => (
                <ObjectItem key={name}>
                  <svg width="16" height="17" viewBox="0 0 16 17" fill="none" stroke="#666" strokeWidth="1.300">{objectIcons[icon]}</svg>{name}
                </ObjectItem>
              ))}
            </ObjectItems>
            <ObjectScroll>
              <svg width="8" height="5" viewBox="0 0 8 5"><path d="M4 0l4 4.500H0z" fill="#444" /></svg>
              <ObjectThumb />
              <svg width="8" height="5" viewBox="0 0 8 5"><path d="M4 4.500L0 0h8z" fill="#999" /></svg>
            </ObjectScroll>
          </ObjectsArea>
          <Toggle><ToggleHalf>Tiled</ToggleHalf><ToggleHalf $on>Floating</ToggleHalf></Toggle>
          <TitleCheck><Box />Show dashboard title</TitleCheck>
        </Side>

        <Canvas>
          <Sheet>
            <SheetTitle>Country with Maximum No of Airports</SheetTitle>
            <FieldHeader $w={689}>Country (airport..<SortMark /></FieldHeader>
            <PlotRow $h={680}>
              <Plot $w={689}>
                <Names>{airports.map(([n]) => <Name key={n}>{n}</Name>)}</Names>
                <Bars>{airports.map(([n, w, c]) => <BarRow key={n}><Bar style={{ width: w, background: palette[c] }} /></BarRow>)}</Bars>
              </Plot>
              <Scroll><Thumb $h={97} /></Scroll>
            </PlotRow>
            <AxisArea $w={689} $h={63}>
              <Ticks $left={140.75} $h={36} $line={35}>
                {[0, 200, 400, 600, 800, 1000, 1200, 1400].map((v, i) => <Tick key={v} $w={i ? 66.5 : 52.5}>{v}</Tick>)}
              </Ticks>
              <AxisTitle $left={350}>Count of airports.csv<SortMark /></AxisTitle>
            </AxisArea>
          </Sheet>

          <Legend>
            <LegendTitle>Country (airports.csv)</LegendTitle>
            <LegendBody>
              <LegendItems>{legend.map((n, i) => <LegendItem key={n}><Swatch $c={palette[i % 20]} />{n}</LegendItem>)}</LegendItems>
              <Scroll><Thumb $h={758} /></Scroll>
            </LegendBody>
          </Legend>

          <Framed>
            <FramedTitle>No of Flight From Airport</FramedTitle>
            <FieldHeader $w={679}>Country (airport..<SortMark /></FieldHeader>
            <PlotRow $h={684}>
              <Plot $w={679}>
                <Names>{flights.map(([n]) => <Name key={n}>{n}</Name>)}</Names>
                <Bars>
                  {flights.map(([n, w, c, v]) => (
                    <BarRow key={n}><Bar style={{ width: w, background: c }} /><Value $drop={v === '185'}>{v}</Value></BarRow>
                  ))}
                </Bars>
              </Plot>
              <Scroll><Thumb $h={98} /></Scroll>
            </PlotRow>
            <AxisArea $w={679} $h={62}>
              <Ticks $left={149} $h={35} $line={33}>
                {[0, 20, 40, 60, 80, 100, 120, 140, 160, 180, 200].map((v, i) => <Tick key={v} $w={i ? 49.6 : 36}>{v}</Tick>)}
              </Ticks>
              <AxisTitle $left={341}>Count of airplanes.csv<SortMark /></AxisTitle>
            </AxisArea>
            <ColorKey>Count of airplanes.csv<RampRow>0<Ramp />185</RampRow></ColorKey>
          </Framed>
        </Canvas>
      </Work>

      <TabBar>
        {tabs.map(t => (
          <Tab key={t.t} $w={t.w} $active={t.on} $end={t.kind === 'end'} $lead={t.kind ? tabLead[t.kind] : 6}>
            {t.kind === 'data' && <Cyl />}{t.kind === 'dash' && <GridIcon />}{t.t}
          </Tab>
        ))}
        <AddTab $w={32}><AddSheet /></AddTab><AddTab $w={32}><AddDash /></AddTab><AddTab $w={32}><AddStory /></AddTab>
      </TabBar>
      <Status>
        <StatusCell $w={157} /><StatusCell $w={32} /><StatusCell $w={32} /><StatusCell $w={57} />
        <StatusCell $w={72} $gap={7}>
          <svg width="9" height="9" viewBox="0 0 9 9"><path d="M1 .5h1.300v8H1zM8 .5v8L3.500 4.500z" fill="currentColor" /></svg>
          <svg width="9" height="9" viewBox="0 0 9 9"><path d="M6.500 .5v8L2 4.500z" fill="currentColor" /></svg>
          <svg width="9" height="9" viewBox="0 0 9 9"><path d="M2.500 .5v8L7 4.500z" fill="currentColor" /></svg>
          <svg width="9" height="9" viewBox="0 0 9 9"><path d="M6.700 .5H8v8H6.700zM1 .5v8l4.500-4z" fill="currentColor" /></svg>
        </StatusCell>
        <StatusCell $w={69} $gap={11}>
          <svg width="11" height="11" viewBox="0 0 11 11"><path d="M0 0h3v3H0zM4 0h3v3H4zM8 0h3v3H8zM0 4h3v3H0zM4 4h3v3H4zM8 4h3v3H8zM0 8h3v3H0zM4 8h3v3H4zM8 8h3v3H8z" fill="#b8b8b8" /></svg>
          <svg width="11" height="11" viewBox="0 0 11 11"><path d="M0 0h11v7H0zM0 8h3v3H0zM4 8h3v3H4zM8 8h3v3H8z" fill="#b8b8b8" /></svg>
          <svg width="11" height="11" viewBox="0 0 11 11"><path d="M0 0h11v11H0z" fill="#5c5c5c" /></svg>
        </StatusCell>
      </Status>

      <Taskbar>
        <Weather>
          <WeatherArt><WeatherIcon /><Alert>1</Alert></WeatherArt>
          <WeatherText><b>30°C</b>Partly sunny</WeatherText>
        </Weather>
        <WindowsArt />
        <SearchBox>
          <svg width="20" height="20" viewBox="0 0 20 20" fill="none" stroke="#222" strokeWidth="2"><circle cx="8.500" cy="8" r="6.500" /><path d="M13 13l5 6" strokeWidth="2.400" /></svg>
          <span>Search</span><SearchArt />
        </SearchBox>
        <Pins>
          {pins.map((p, i) => <Pin key={i} $on={p.on}>{p.art}{p.avatar}{p.dot && <Dot $on={p.on} />}</Pin>)}
        </Pins>
        <Tray>
          <TrayChevron><Ico w={14} h={10} sw={1.8}><path d="M1 8.500l6-6.500 6 6.500" /></Ico></TrayChevron>
          <Lang>ENG<br />IN</Lang>
          <TrayIcons>
            <Ico w={20} h={18} sw={1.5}><path d="M.8 7a13 13 0 0 1 18.400 0M3.600 9.800a9 9 0 0 1 12.800 0M6.400 12.600a5 5 0 0 1 7.200 0" /><circle cx="10" cy="15.200" r="1.700" fill="currentColor" stroke="none" /></Ico>
            <Ico w={21} h={18} sw={1.3}><path d="M1 6.500h3l4.500-4v13L4 11.500H1zM11.500 6.500c1.200 1.500 1.200 3.500 0 5M14 4.500c2.300 2.700 2.300 6.300 0 9M16.500 2.500c3.500 4 3.500 9 0 13" /></Ico>
            <Ico w={20} h={18} sw={1.5}><rect x="2" y="4" width="15.500" height="11.500" rx="2" /><path d="M4.500 6.500h10.500v6.500H4.500z" fill="currentColor" /><path d="M18.900 8v4" strokeWidth="1.800" /><path d="M5.500 0L1 6.500h3l-1 5 5.500-7H5.500z" fill="currentColor" stroke="#e4d8d6" strokeWidth=".6" /></Ico>
          </TrayIcons>
          <Clock>12:43<br />21-10-2023</Clock>
          <Notice>13</Notice>
        </Tray>
      </Taskbar>
    </Screen>
  );
}
